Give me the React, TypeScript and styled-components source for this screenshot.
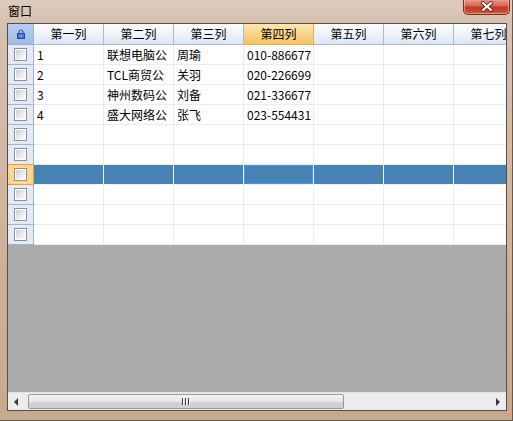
import React from 'react';
import styled, { createGlobalStyle } from 'styled-components';

const GlobalStyle = createGlobalStyle`
    html, body {
        margin: 0;
        padding: 0;
        background: #cdb29a;
    }
    body {
        font-family: "Noto Sans CJK SC", "Liberation Sans", sans-serif;
        font-size: 12px;
    }
`;

const Window = styled.div`
    width: 513px;
    height: 421px;
    display: flex;
    flex-direction: column;
    box-sizing: border-box;
    background: linear-gradient(180deg, #dccbbe 0px, #d6c1af 22px, #cfb198 60%, #c9a98d 100%);
    border-right: 1px solid #6a5a4e;
    border-bottom: 1px solid #6a5a4e;
    overflow: hidden;
`;

const TitleBar = styled.div`
    height: 23px;
    display: flex;
    align-items: flex-start;
    justify-content: space-between;
    padding-left: 8px;
    padding-right: 2px;
`;

const Title = styled.span`
    margin-top: 4px;
    font-size: 12px;
    line-height: 14px;
    color: #000;
`;

const CloseButton = styled.div`
    width: 47px;
    height: 16px;
    margin-top: -1px;
    box-sizing: border-box;
    border: 1px solid #7a2c20;
    border-top: none;
    border-radius: 0 0 5px 5px;
    background: linear-gradient(180deg, #e9a596 0%, #d7664f 45%, #c0381f 55%, #d25a3c 100%);
    box-shadow: inset 0 0 0 1px rgba(255, 210, 200, 0.5);
    display: flex;
    align-items: center;
    justify-content: center;
`;

const Client = styled.div`
    flex: 1;
    display: flex;
    flex-direction: column;
    margin: 0 5px 9px 7px;
    border: 1px solid #4f4f4f;
    background: #ababab;
    overflow: hidden;
`;

const Grid = styled.div`
    display: grid;
    grid-template-columns: 26px repeat(7, 70px);
    background: #fff;
`;

const Corner = styled.div`
    height: 21px;
    box-sizing: border-box;
    background: linear-gradient(180deg, #b4cdee, #a2bde5);
    border-right: 1px solid #9db4cf;
    border-bottom: 1px solid #9db4cf;
    display: flex;
    align-items: center;
    justify-content: center;
`;

const HeaderCell = styled.div<{ $active?: boolean }>`
    height: 21px;
    box-sizing: border-box;
    background: ${({ $active }) =>
        $active
            ? 'linear-gradient(180deg, #fde6b0 0%, #f9d48a 50%, #f5c462 100%)'
            : 'linear-gradient(180deg, #fbfcfe 0%, #eef2f9 50%, #dde6f3 100%)'};
    border-right: 1px solid ${({ $active }) => ($active ? '#f0a848' : '#a6bbd4')};
    border-bottom: 1px solid ${({ $active }) => ($active ? '#f0a848' : '#a6bbd4')};
    color: #000;
    text-align: center;
    line-height: 20px;
    white-space: nowrap;
`;

const RowHeader = styled.div<{ $active?: boolean }>`
    box-sizing: border-box;
    background: ${({ $active }) => ($active ? '#fed68e' : '#e2eaf6')};
    border-right: 1px solid ${({ $active }) => ($active ? '#f29c38' : '#9fb6d1')};
    border-bottom: 1px solid ${({ $active }) => ($active ? '#f29c38' : '#9fb6d1')};
    border-top: ${({ $active }) => ($active ? '1px solid #f29c38' : 'none')};
    margin-top: ${({ $active }) => ($active ? '-1px' : '0')};
    height: ${({ $active }) => ($active ? '21px' : '20px')};
    display: flex;
    align-items: center;
    justify-content: center;
`;

const CheckBox = styled.div`
    width: 13px;
    height: 13px;
    box-sizing: border-box;
    border: 1px solid #8e8f8f;
    background: #fff;
    padding: 1px;
    &::after {
        content: '';
        display: block;
        width: 100%;
        height: 100%;
        background: linear-gradient(135deg, #cbcfd5 0%, #e8eaec 55%, #ffffff 100%);
    }
`;

const Cell = styled.div<{ $selected?: boolean; $current?: boolean }>`
    height: 20px;
    box-sizing: border-box;
    padding-left: 3px;
    background: ${({ $selected }) => ($selected ? '#4682b4' : '#fff')};
    border-right: 1px solid ${({ $selected }) => ($selected ? '#f2f2f2' : '#ececec')};
    border-bottom: 1px solid ${({ $selected }) => ($selected ? '#f2f2f2' : '#ececec')};
    box-shadow: ${({ $current }) => ($current ? 'inset 0 0 0 1px #3399ff' : 'none')};
    color: #000;
    line-height: 19px;
    white-space: nowrap;
    overflow: hidden;
`;

const Empty = styled.div`
    flex: 1;
    background: #ababab;
`;

const ScrollBar = styled.div`
    height: 17px;
    display: flex;
    align-items: stretch;
    background: #ececec;
    border-top: 1px solid #e2e2e2;
`;

const ArrowButton = styled.div`
    width: 17px;
    display: flex;
    align-items: center;
    justify-content: center;
`;

const Track = styled.div`
    flex: 1;
    display: flex;
    align-items: stretch;
    padding: 1px 0 1px 3px;
`;

const Thumb = styled.div`
    width: 316px;
    box-sizing: border-box;
    border: 1px solid #9a9a9a;
    border-radius: 2px;
    background: linear-gradient(180deg, #f4f4f4 0%, #e6e6e6 50%, #d4d4d4 51%, #cfcfcf 100%);
    display: flex;
    align-items: center;
    justify-content: center;
    gap: 1px;
`;

const Grip = styled.span`
    width: 1px;
    height: 7px;
    background: #3a3a3a;
    box-shadow: 1px 0 0 #fafafa;
    margin-right: 1px;
`;

const columns = ['第一列', '第二列', '第三列', '第四列', '第五列', '第六列', '第七列'];

const data: string[][] = [
    ['1', '联想电脑公', '周瑜', '010-886677'],
    ['2', 'TCL商贸公', '关羽', '020-226699'],
    ['3', '神州数码公', '刘备', '021-336677'],
    ['4', '盛大网络公', '张飞', '023-554431'],
];

const ROW_COUNT = 10;
const SELECTED_ROW = 6;
const CURRENT_COL = 3;

function LockIcon() {
    return (
        <svg width="8" height="10" viewBox="0 0 8 10">
            <path d="M2 4.5V3a2 2 0 0 1 4 0v1.5" fill="none" stroke="#2d55b8" strokeWidth="1.2" />
            <rect x="0.5" y="4.5" width="7" height="5" fill="#4a74d6" stroke="#22449e" strokeWidth="1" />
            <rect x="3.5" y="6" width="1" height="2" fill="#c8d8ff" />
        </svg>
    );
}

function CloseIcon() {
    return (
        <svg width="14" height="11" viewBox="0 0 14 11">
            <path d="M3 2L11 9M11 2L3 9" stroke="#6b241a" strokeWidth="4" strokeLinecap="round" />
            <path d="M3 2L11 9M11 2L3 9" stroke="#ffffff" strokeWidth="2.2" strokeLinecap="round" />
        </svg>
    );
}

export default function App() {
    const rows = Array.from({ length: ROW_COUNT }, (_, i) => data[i] || []);

    return (
        <>
            <GlobalStyle />
            <Window>
                <TitleBar>
                    <Title>窗口</Title>
                    <CloseButton>
                        <CloseIcon />
                    </CloseButton>
                </TitleBar>
                <Client>
                    <Grid>
                        <Corner>
                            <LockIcon />
                        </Corner>
                        {columns.map((c, i) => (
                            <HeaderCell key={c} $active={i === CURRENT_COL}>{c}</HeaderCell>
                        ))}
                        {rows.map((row, r) => (
                            <React.Fragment key={r}>
                                <RowHeader $active={r === SELECTED_ROW}>
                                    <CheckBox />
                                </RowHeader>
                                {columns.map((c, ci) => (
                                    <Cell
                                        key={c}
                                        $selected={r === SELECTED_ROW}
                                        $current={r === SELECTED_ROW && ci === CURRENT_COL}
                                    >
                                        {row[ci] || ''}
                                    </Cell>
                                ))}
                            </React.Fragment>
                        ))}
                    </Grid>
                    <Empty />
                    <ScrollBar>
                        <ArrowButton>
                            <svg width="5" height="8" viewBox="0 0 5 8">
                                <path d="M4 0L0 4L4 8Z" fill="#3a3a3a" />
                            </svg>
                        </ArrowButton>
                        <Track>
                            <Thumb>
                                <Grip />
                                <Grip />
                                <Grip />
                            </Thumb>
                        </Track>
                        <ArrowButton>
                            <svg width="5" height="8" viewBox="0 0 5 8">
                                <path d="M1 0L5 4L1 8Z" fill="#3a3a3a" />
                            </svg>
                        </ArrowButton>
                    </ScrollBar>
                </Client>
            </Window>
        </>
    );
}
